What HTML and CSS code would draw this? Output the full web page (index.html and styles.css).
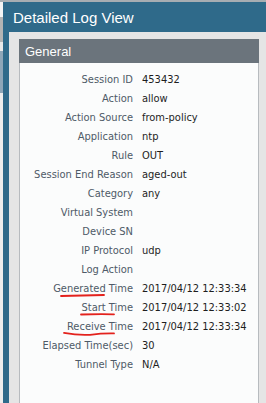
FILE: index.html
```html
<!DOCTYPE html>
<html>
<head>
<meta charset="utf-8">
<link rel="stylesheet" href="styles.css">
</head>
<body>
<div class="page">
  <div class="backdrop">
    <div class="bd bd-white"></div>
    <div class="bd bd-gray"></div>
    <div class="bd bd-white2"></div>
    <div class="bd bd-blue"></div>
    <div class="bd bd-rest"></div>
  </div>
  <div class="modal">
    <div class="modal-title">Detailed Log View</div>
    <div class="modal-body">
      <div class="panel">
        <div class="panel-header">General</div>
        <div class="panel-body">
          <div class="row"><span class="label">Session ID</span><span class="value">453432</span></div>
          <div class="row"><span class="label">Action</span><span class="value">allow</span></div>
          <div class="row"><span class="label">Action Source</span><span class="value">from-policy</span></div>
          <div class="row"><span class="label">Application</span><span class="value">ntp</span></div>
          <div class="row"><span class="label">Rule</span><span class="value">OUT</span></div>
          <div class="row"><span class="label">Session End Reason</span><span class="value">aged-out</span></div>
          <div class="row"><span class="label">Category</span><span class="value">any</span></div>
          <div class="row"><span class="label">Virtual System</span><span class="value"></span></div>
          <div class="row"><span class="label">Device SN</span><span class="value"></span></div>
          <div class="row"><span class="label">IP Protocol</span><span class="value">udp</span></div>
          <div class="row"><span class="label">Log Action</span><span class="value"></span></div>
          <div class="row"><span class="label">Generated Time</span><span class="value">2017/04/12 12:33:34</span></div>
          <div class="row"><span class="label">Start Time</span><span class="value">2017/04/12 12:33:02</span></div>
          <div class="row"><span class="label">Receive Time</span><span class="value">2017/04/12 12:33:34</span></div>
          <div class="row"><span class="label">Elapsed Time(sec)</span><span class="value">30</span></div>
          <div class="row"><span class="label">Tunnel Type</span><span class="value">N/A</span></div>
        </div>
      </div>
    </div>
  </div>
</div>
<svg class="marks" width="266" height="403" viewBox="0 0 266 403">
  <path d="M61 296 Q82 295.5 104 295" />
  <path d="M81 314.5 Q97 314 114 314.3" />
  <path d="M64 332.8 Q78 335.5 90 334.8 Q102 333.2 114 333.4" />
</svg>
</body>
</html>
```

FILE: styles.css
```css
html, body {
  margin: 0;
  padding: 0;
}
body {
  width: 266px;
  height: 403px;
  overflow: hidden;
  position: relative;
  background: #f2f2f2;
}
.page {
  display: flex;
  height: 403px;
  border-top: 2px solid #a7adb2;
  box-sizing: border-box;
}
.backdrop {
  width: 3px;
  display: flex;
  flex-direction: column;
}
.bd-white { height: 15px; background: #f4f4f4; }
.bd-gray { height: 25px; background: #b4b4b4; }
.bd-white2 { height: 9px; background: #e9e9e9; }
.bd-blue { height: 42px; background: #8ea6b8; }
.bd-rest { flex: 1; background: #eeeeee; }
.modal {
  flex: 1;
  display: flex;
  flex-direction: column;
  background: #2f6a8a;
}
.modal-title {
  height: 30px;
  line-height: 31px;
  padding-left: 10px;
  color: #ffffff;
  font-family: "Liberation Sans Narrow", "Liberation Sans", sans-serif;
  font-size: 15px;
}
.modal-body {
  flex: 1;
  margin-left: 6px;
  background: #e5e5e5;
  padding: 7px 7px 0 10px;
  display: flex;
  flex-direction: column;
}
.panel {
  flex: 1;
  display: flex;
  flex-direction: column;
}
.panel-header {
  height: 24px;
  line-height: 25px;
  background: #6b747c;
  color: #ffffff;
  padding-left: 6px;
  font-family: "Liberation Sans Narrow", "Liberation Sans", sans-serif;
  font-size: 13px;
}
.panel-body {
  flex: 1;
  background: #fbfcfc;
  border-left: 1px solid #b7bbbf;
  border-right: 1px solid #b7bbbf;
  padding-top: 7px;
}
.row {
  display: grid;
  grid-template-columns: 113px 1fr;
  column-gap: 9px;
  height: 19px;
  line-height: 19px;
  font-family: "DejaVu Sans Condensed", "DejaVu Sans", sans-serif;
  font-size: 11px;
}
.label {
  text-align: right;
  color: #4e5a67;
  white-space: nowrap;
}
.value {
  color: #1e1e1e;
  white-space: nowrap;
}
.marks {
  position: absolute;
  left: 0;
  top: 0;
  pointer-events: none;
}
.marks path {
  fill: none;
  stroke: #e3221d;
  stroke-width: 1.8;
  stroke-linecap: round;
}
```
